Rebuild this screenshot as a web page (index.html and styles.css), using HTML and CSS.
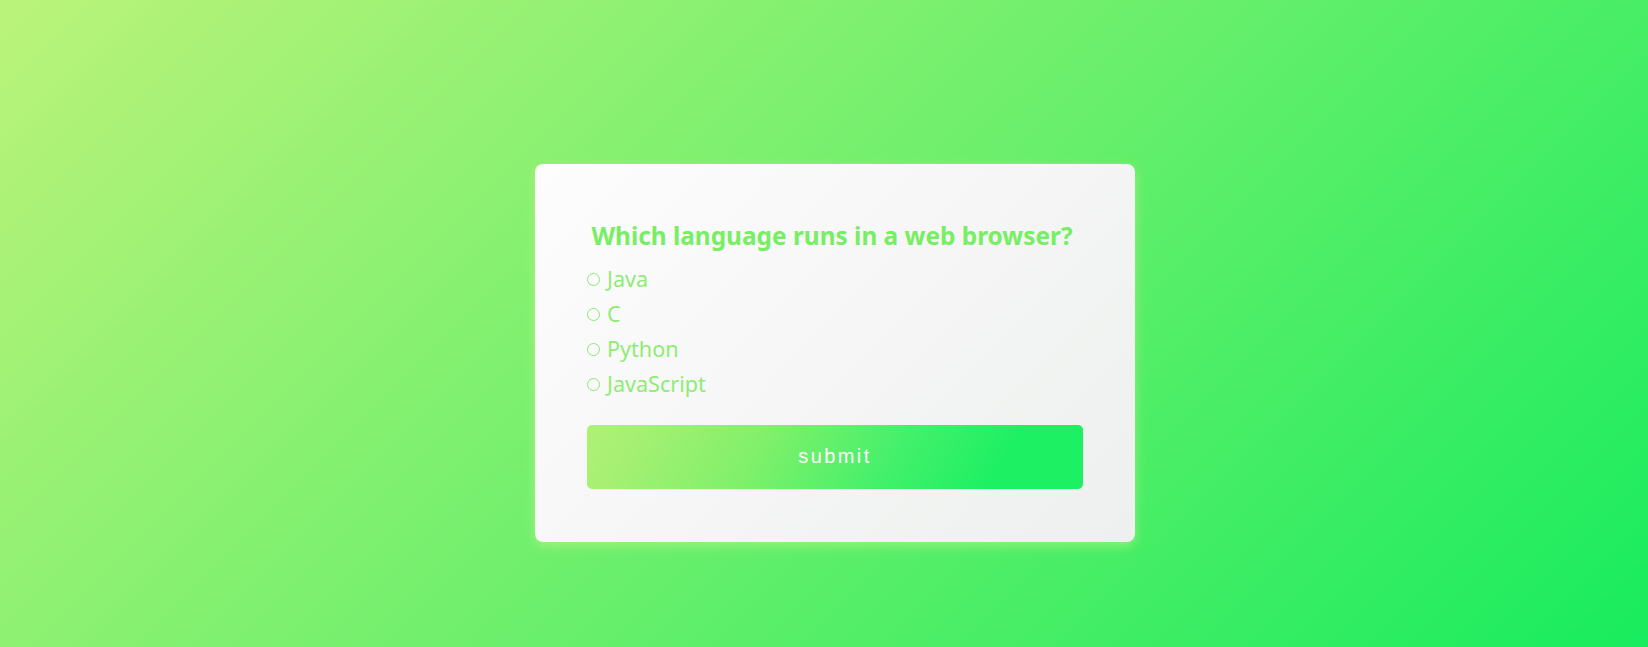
FILE: index.html
```html
<!DOCTYPE html>
<html lang="en">
<head>
<meta charset="utf-8">
<title>Quiz</title>
<link rel="stylesheet" href="styles.css">
</head>
<body>
<main class="page">
  <form class="quiz-card">
    <h2 class="question">Which language runs in a web browser?</h2>
    <ul class="options">
      <li class="option"><label><span class="radio"></span><span class="label-text">Java</span></label></li>
      <li class="option"><label><span class="radio"></span><span class="label-text">C</span></label></li>
      <li class="option"><label><span class="radio"></span><span class="label-text">Python</span></label></li>
      <li class="option"><label><span class="radio"></span><span class="label-text">JavaScript</span></label></li>
    </ul>
    <button type="button" class="submit-btn">submit</button>
  </form>
</main>
</body>
</html>
```

FILE: styles.css
```css
* {
  box-sizing: border-box;
}

html, body {
  margin: 0;
  padding: 0;
  height: 100%;
}

body {
  font-family: "Noto Sans", "Open Sans", sans-serif;
  background: linear-gradient(135deg, #bbf37a 0%, #6cef6c 50%, #18ec5e 100%);
  overflow: hidden;
}

.page {
  height: 100vh;
  display: flex;
  align-items: center;
  justify-content: center;
  padding: 59px 0 0 22px;
}

.quiz-card {
  width: 600px;
  padding: 56px 52px 53px;
  border-radius: 8px;
  background: linear-gradient(135deg, #fefdfe 0%, #f5f6f5 50%, #edf0ee 100%);
  box-shadow: 0 4px 12px rgba(200, 248, 140, 0.55);
  display: flex;
  flex-direction: column;
}

.question {
  margin: 0 0 9px;
  font-size: 24.4px;
  line-height: 32px;
  font-weight: 700;
  color: #78ee64;
  text-align: center;
  padding-right: 6px;
}

.options {
  list-style: none;
  margin: 0 0 24px;
  padding: 0;
}

.option {
  height: 35px;
  line-height: 35px;
  font-size: 21.6px;
  color: #8eec74;
}

.option label {
  display: flex;
  align-items: center;
}

.radio {
  width: 13px;
  height: 13px;
  border: 1px solid #86ec70;
  border-radius: 50%;
  margin: 2px 7px 0 0;
  flex: none;
}

.submit-btn {
  height: 64px;
  width: 100%;
  border: 0;
  border-radius: 5px;
  background: linear-gradient(120deg, #aef175 0%, #a6f073 10%, #80f06a 35%, #42f06b 62%, #1ef063 82%, #1ef063 100%);
  color: #ffffff;
  font-family: "Liberation Sans", Arial, sans-serif;
  font-size: 20px;
  letter-spacing: 2.4px;
  padding: 0 0 2px 0;
  cursor: pointer;
}
```
